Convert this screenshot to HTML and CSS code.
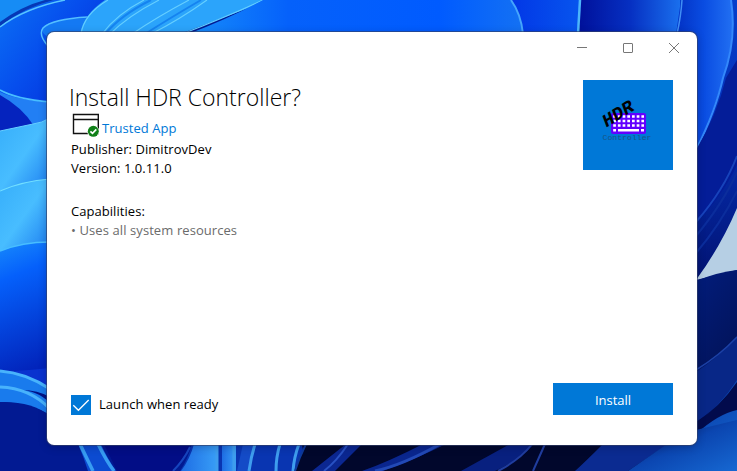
FILE: index.html
```html
<!DOCTYPE html>
<html lang="en">
<head>
<meta charset="utf-8">
<title>Install HDR Controller?</title>
<link rel="stylesheet" href="styles.css">
</head>
<body>
<svg class="wallpaper" viewBox="0 0 737 471" aria-hidden="true">
  <defs>
    <linearGradient id="loop" x1="0" x2="1" y1="0" y2=".7"><stop offset="0" stop-color="#0b70f5"/><stop offset=".45" stop-color="#064eed"/><stop offset="1" stop-color="#0329d4"/></linearGradient>
    <linearGradient id="sky" x1="0" x2="1" y1="0" y2="1"><stop offset="0" stop-color="#36aefa"/><stop offset=".5" stop-color="#48bdff"/><stop offset="1" stop-color="#1c7cf0"/></linearGradient>
    <linearGradient id="fall" x1="0" x2=".15" y1="0" y2="1"><stop offset="0" stop-color="#1789fc"/><stop offset=".28" stop-color="#0560fb"/><stop offset="1" stop-color="#0224bb"/></linearGradient>
    <linearGradient id="top" x1="0" x2="1" y1="0" y2="0"><stop offset="0" stop-color="#168cfa"/><stop offset=".3" stop-color="#0561fb"/><stop offset=".75" stop-color="#005bff"/><stop offset="1" stop-color="#1471f3"/></linearGradient>
    <linearGradient id="top2" x1="0" x2="1" y1="0" y2="0"><stop offset="0" stop-color="#0237e6"/><stop offset="1" stop-color="#0755ee"/></linearGradient>
    <linearGradient id="top3" x1="0" x2="1" y1="0" y2="0"><stop offset="0" stop-color="#00109a"/><stop offset=".5" stop-color="#0630c2"/><stop offset="1" stop-color="#1b73f0"/></linearGradient>
    <linearGradient id="rim" x1="0" x2="1" y1="0" y2="0"><stop offset="0" stop-color="#0231c4"/><stop offset=".5" stop-color="#0a4de2"/><stop offset="1" stop-color="#216ff2"/></linearGradient>
    <linearGradient id="right" x1="0" x2="0" y1="0" y2="1"><stop offset="0" stop-color="#0440cb"/><stop offset=".45" stop-color="#0530b8"/><stop offset="1" stop-color="#02126f"/></linearGradient>
    <linearGradient id="navy" x1="0" x2=".3" y1="0" y2="1"><stop offset="0" stop-color="#021d7e"/><stop offset="1" stop-color="#020e47"/></linearGradient>
    <linearGradient id="corner" x1="0" x2="1" y1="0" y2="1"><stop offset="0" stop-color="#020d4e"/><stop offset=".5" stop-color="#0b46b1"/><stop offset="1" stop-color="#1668d2"/></linearGradient>
    <linearGradient id="stem" x1="0" x2="1" y1="0" y2="0"><stop offset="0" stop-color="#1e6de4"/><stop offset="1" stop-color="#379cf6"/></linearGradient>
  </defs>
  <rect width="737" height="471" fill="#021a92"/>

  <path d="M0 0H150V200H0Z" fill="#168cf5"/>
  <path d="M0 24Q25 7 54 0H120L80 40L60 110H0Z" fill="url(#loop)"/>
  <path d="M0 22Q22 6 45 0H54Q25 7 0 26Z" fill="#0638b5"/>
  <path d="M0 27Q25 8 65 0" fill="none" stroke="#58c6ff" stroke-width="1.3"/>
  <path d="M50 38Q38 32 44 26Q53 19 88 18L82 32V45Z" fill="#1479f3"/>
  <path d="M48 46Q38 35 43 28Q52 19 88 17" fill="none" stroke="#54bfff" stroke-width="1.5"/>
  <path d="M0 92Q18 100 50 102V125H0Z" fill="#227ff4"/>
  <path d="M0 95Q22 107 34 126L0 132Z" fill="#0523be"/>
  <path d="M0 90Q16 99 50 102" fill="none" stroke="#48beff" stroke-width="1.5"/>
  <path d="M0 131L33 124Q42 123 50 118V190H0Z" fill="url(#sky)"/>
  <path d="M0 131L33 124Q42 123 50 118" fill="none" stroke="#67d0ff"/>
  <path d="M0 191Q23 181 50 179V250H0Z" fill="url(#sky)"/>
  <path d="M0 191Q23 181 50 179" fill="none" stroke="#72dfff" stroke-width="1.2"/>
  <path d="M0 251Q22 242 50 242V380H0Z" fill="url(#fall)"/>
  <path d="M0 251Q22 242 50 242" fill="none" stroke="#48beff" stroke-width="1.5"/>
  <path d="M14 371Q32 370 50 368V400Z" fill="#0932cf"/>
  <path d="M0 371Q26 373 50 389V415Q30 403 0 402Z" fill="#197bed"/>
  <path d="M18 390Q37 390 50 403V397Q36 389 18 390Z" fill="#001285"/>
  <path d="M0 371Q26 373 50 389M0 387Q30 388 50 409" fill="none" stroke="#48b3fc" stroke-width="3"/>
  <path d="M0 402Q32 401 50 416V471H0Z" fill="#021a92"/>

  <path d="M80 34Q83 15 105 0H270L180 34Z" fill="#2ba4fb"/>
  <path d="M81 34Q84 14 108 0M102 34Q117 14 144 0M110 34Q128 16 159 0M132 34Q157 17 189 0M151 34Q179 20 207 0M182 34Q226 17 263 0" fill="none" stroke="#65cfff" stroke-width="1.1"/>
  <path d="M105 34Q121 15 151 0M145 34Q170 18 201 0" fill="none" stroke="#1583f0" stroke-width="2"/>
  <path d="M188 34Q230 18 263 0H511Q521 14 523 34Z" fill="url(#top)"/>
  <path d="M511 0Q521 14 523 34H578L580 0Z" fill="url(#top2)"/>
  <path d="M511 0Q521 14 523 34" fill="none" stroke="#45a6fc" stroke-width="2"/>
  <path d="M580 0L578 34H680L683 0Z" fill="url(#top3)"/>
  <path d="M580 0L578 34" stroke="#4cb6fb" stroke-width="2.5"/>

  <path d="M680 0H737V285H690Z" fill="url(#right)"/>
  <path d="M681 0H731Q736 40 723 78Q716 105 696 150L676 34Z" fill="url(#rim)"/>
  <path d="M682 0Q681 16 677 34" fill="none" stroke="#408ff5" stroke-width="1.5"/>
  <path d="M731 0Q737 40 723 78Q716 110 696 150" fill="none" stroke="#3388fb" stroke-width="2"/>
  <path d="M696 150Q717 115 726 78L737 60V165Q720 200 696 222Z" fill="#041d98"/>
  <path d="M737 156Q724 190 696 222" fill="none" stroke="#1743bb" stroke-width="2"/>
  <path d="M737 172Q724 202 696 236M737 191Q720 225 696 253" fill="none" stroke="#0b2d9c" stroke-width="2"/>
  <path d="M737 208Q721 246 696 280L737 270Z" fill="#b6cfe4"/>
  <path d="M696 281Q718 272 737 270V471H690Z" fill="url(#navy)"/>
  <path d="M696 372Q719 357 737 336V390L696 423Z" fill="#082787"/>
  <path d="M696 370Q719 356 737 337" fill="none" stroke="#1c41a6" stroke-width="1.5"/>
  <path d="M696 423Q719 408 737 380V471H640V440H696Z" fill="url(#corner)"/>
  <path d="M696 422Q719 408 737 382V410Q718 414 696 434Z" fill="#020b4c"/>

  <path d="M300 444H680V471H290Z" fill="#01072c"/>
  <path d="M78 444Q84 458 88 471H116Q106 456 101 444Z" fill="#0c4bd1"/>
  <path d="M80 444Q88 461 93 471M98 444Q107 462 114 471" fill="none" stroke="#379cf2" stroke-width="3.5"/>
  <path d="M104 444H192L174 471H117Z" fill="#020d86"/>
  <path d="M192 444Q188 459 180 471H306L302 444Z" fill="#0935b1"/>
  <path d="M194 444H216V471H181Q190 459 194 444Z" fill="url(#stem)"/>
  <path d="M222 444H236V471H222Z" fill="url(#stem)"/>
  <path d="M243 444H256L248 471H237Z" fill="#144bc7"/>
  <path d="M217 444V471M234 444V471M255 444Q251 457 249 471M280 444Q276 457 276 471M299 444Q294 457 293 471" fill="none" stroke="#3e9dee" stroke-width="3"/>
  <path d="M306 444Q299 458 295 471H312L346 444Z" fill="#01072c"/>
  <path d="M306 444Q299 458 295 471" fill="none" stroke="#0d399b" stroke-width="2"/>
  <path d="M173 471Q184 460 190 447" fill="none" stroke="#1644be" stroke-width="2"/>
  <path d="M346 444L312 471H335L362 444Z" fill="#0b2791"/>
  <path d="M348 444Q337 461 324 471" fill="none" stroke="#2851c3" stroke-width="2"/>
  <path d="M423 444Q388 462 362 471H383Q418 458 446 444Z" fill="#0a268e"/>
  <path d="M440 444Q403 465 375 471" fill="none" stroke="#2249b6" stroke-width="3"/>
  <path d="M510 444L461 471H495Q521 459 534 444Z" fill="#08207f"/>
  <path d="M532 444Q521 459 498 471M545 444L533 471" fill="none" stroke="#203d9e" stroke-width="2"/>
  <path d="M603 444Q585 462 575 471H628L668 444Z" fill="#0b2b91"/>
  <path d="M667 444L628 471H737V420L696 430Z" fill="url(#corner)"/>
</svg>

<main class="window">
  <header class="titlebar">
    <svg class="caption" viewBox="0 0 10 10"><path d="M0 4.5H10"/></svg>
    <svg class="caption" viewBox="0 0 10 10"><rect x=".5" y=".5" width="9" height="9" rx=".5"/></svg>
    <svg class="caption" viewBox="0 0 10 10"><path d="M0 0L10 10M10 0L0 10"/></svg>
  </header>
  <section class="content">
    <div class="details">
      <h1>Install HDR Controller?</h1>
      <div class="trusted">
        <svg class="trusted-icon" viewBox="0 0 28 24">
          <path d="M1.5 1.5H26.3V20.5H1.5ZM1.5 6.5H26.3" fill="none" stroke="#111" stroke-width="1.4"/>
          <circle cx="21.3" cy="18.3" r="6" fill="#fff"/><circle cx="21.3" cy="18.3" r="5.5" fill="#108018"/>
          <path d="M18.4 18.3L20.5 20.3L24.3 16.3" fill="none" stroke="#fff" stroke-width="1.7"/>
        </svg>
        <a class="trusted-link">Trusted App</a>
      </div>
      <p class="publisher">Publisher: DimitrovDev</p>
      <p class="version">Version: 1.0.11.0</p>
      <h2>Capabilities:</h2>
      <p class="capability">• Uses all system resources</p>
    </div>
    <svg class="app-logo" viewBox="0 0 90 90">
      <rect x="28" y="33" width="35" height="21" rx="2" fill="#6200ff"/>
      <g stroke="#fff" stroke-width="2.6" stroke-dasharray="2.7 2">
        <path d="M30.2 36.5H61M30.2 41H61M30.2 45.5H61"/>
      </g>
      <path d="M30.2 50.3H33M35 50.3H56M58 50.3H61" stroke="#fff" stroke-width="2.6"/>
      <text class="logo-hdr" transform="translate(23.5 47.5) rotate(-32)" textLength="34" lengthAdjust="spacingAndGlyphs">HDR</text>
      <text class="logo-name" x="19.5" y="59.5" textLength="49" lengthAdjust="spacingAndGlyphs">Controller</text>
    </svg>
  </section>
  <footer class="actions">
    <label class="launch">
      <svg class="checkbox" viewBox="0 0 20 20"><rect width="20" height="20"/><path d="M2.3 10.2L7.4 15.3L17.7 5"/></svg>
      <span>Launch when ready</span>
    </label>
    <button class="install">Install</button>
  </footer>
</main>
</body>
</html>
```

FILE: styles.css
```css
* { box-sizing: border-box; }
body {
  margin: 0;
  width: 737px;
  height: 471px;
  overflow: hidden;
  padding: 32px 40px 26px 47px;
  font: 13px/19px "Open Sans", "Noto Sans", sans-serif;
  letter-spacing: .05px;
  color: #000;
}
.wallpaper { position: absolute; inset: 0; width: 737px; height: 471px; z-index: -1; }
.wallpaper path { filter: blur(.5px); }
.window {
  display: flex;
  flex-direction: column;
  width: 650px;
  height: 413px;
  background: #fff;
  border-radius: 7px;
  box-shadow: 0 0 0 1px rgba(50, 65, 105, .65), 0 2px 8px rgba(0, 0, 30, .25);
}
.titlebar { display: flex; justify-content: flex-end; gap: 36px; height: 48px; padding: 11px 18px 0 0; }
.caption { width: 10px; height: 10px; fill: none; stroke: #777; stroke-width: 1; overflow: visible; }
.content { display: flex; justify-content: space-between; padding: 0 24px; flex: 1; }
.details { display: flex; flex-direction: column; }
h1 { margin: 1px 0 0 -2px; font-size: 23px; line-height: 32px; font-weight: 300; letter-spacing: 0; white-space: nowrap; }
h2, p { margin: 0; font-size: 13px; line-height: 19px; font-weight: 400; white-space: nowrap; }
.trusted { display: flex; height: 27px; padding-left: 1px; }
.trusted-icon { width: 28px; height: 24px; }
.trusted-link { color: #0078d7; margin: 6px 0 0 2px; }
h2 { margin-top: 24px; }
.capability { color: #6b6b6b; word-spacing: .2px; }
.app-logo { width: 90px; height: 90px; background: #0078d7; }
.logo-hdr { font: italic bold 18px "Liberation Mono", monospace; letter-spacing: 0; fill: #000; }
.logo-name { font: 8px "Liberation Mono", monospace; letter-spacing: 0; fill: #175684; }
.actions { display: flex; justify-content: space-between; align-items: flex-end; padding: 0 24px 30px; }
.launch { display: flex; gap: 8px; height: 20px; }
.checkbox { width: 20px; height: 20px; fill: #0078d7; }
.checkbox path { fill: none; stroke: #fff; stroke-width: 1.3; }
.install { width: 120px; height: 32px; border: 0; padding: 2px 0 0; background: #0078d7; color: #fff; font: inherit; }
```
